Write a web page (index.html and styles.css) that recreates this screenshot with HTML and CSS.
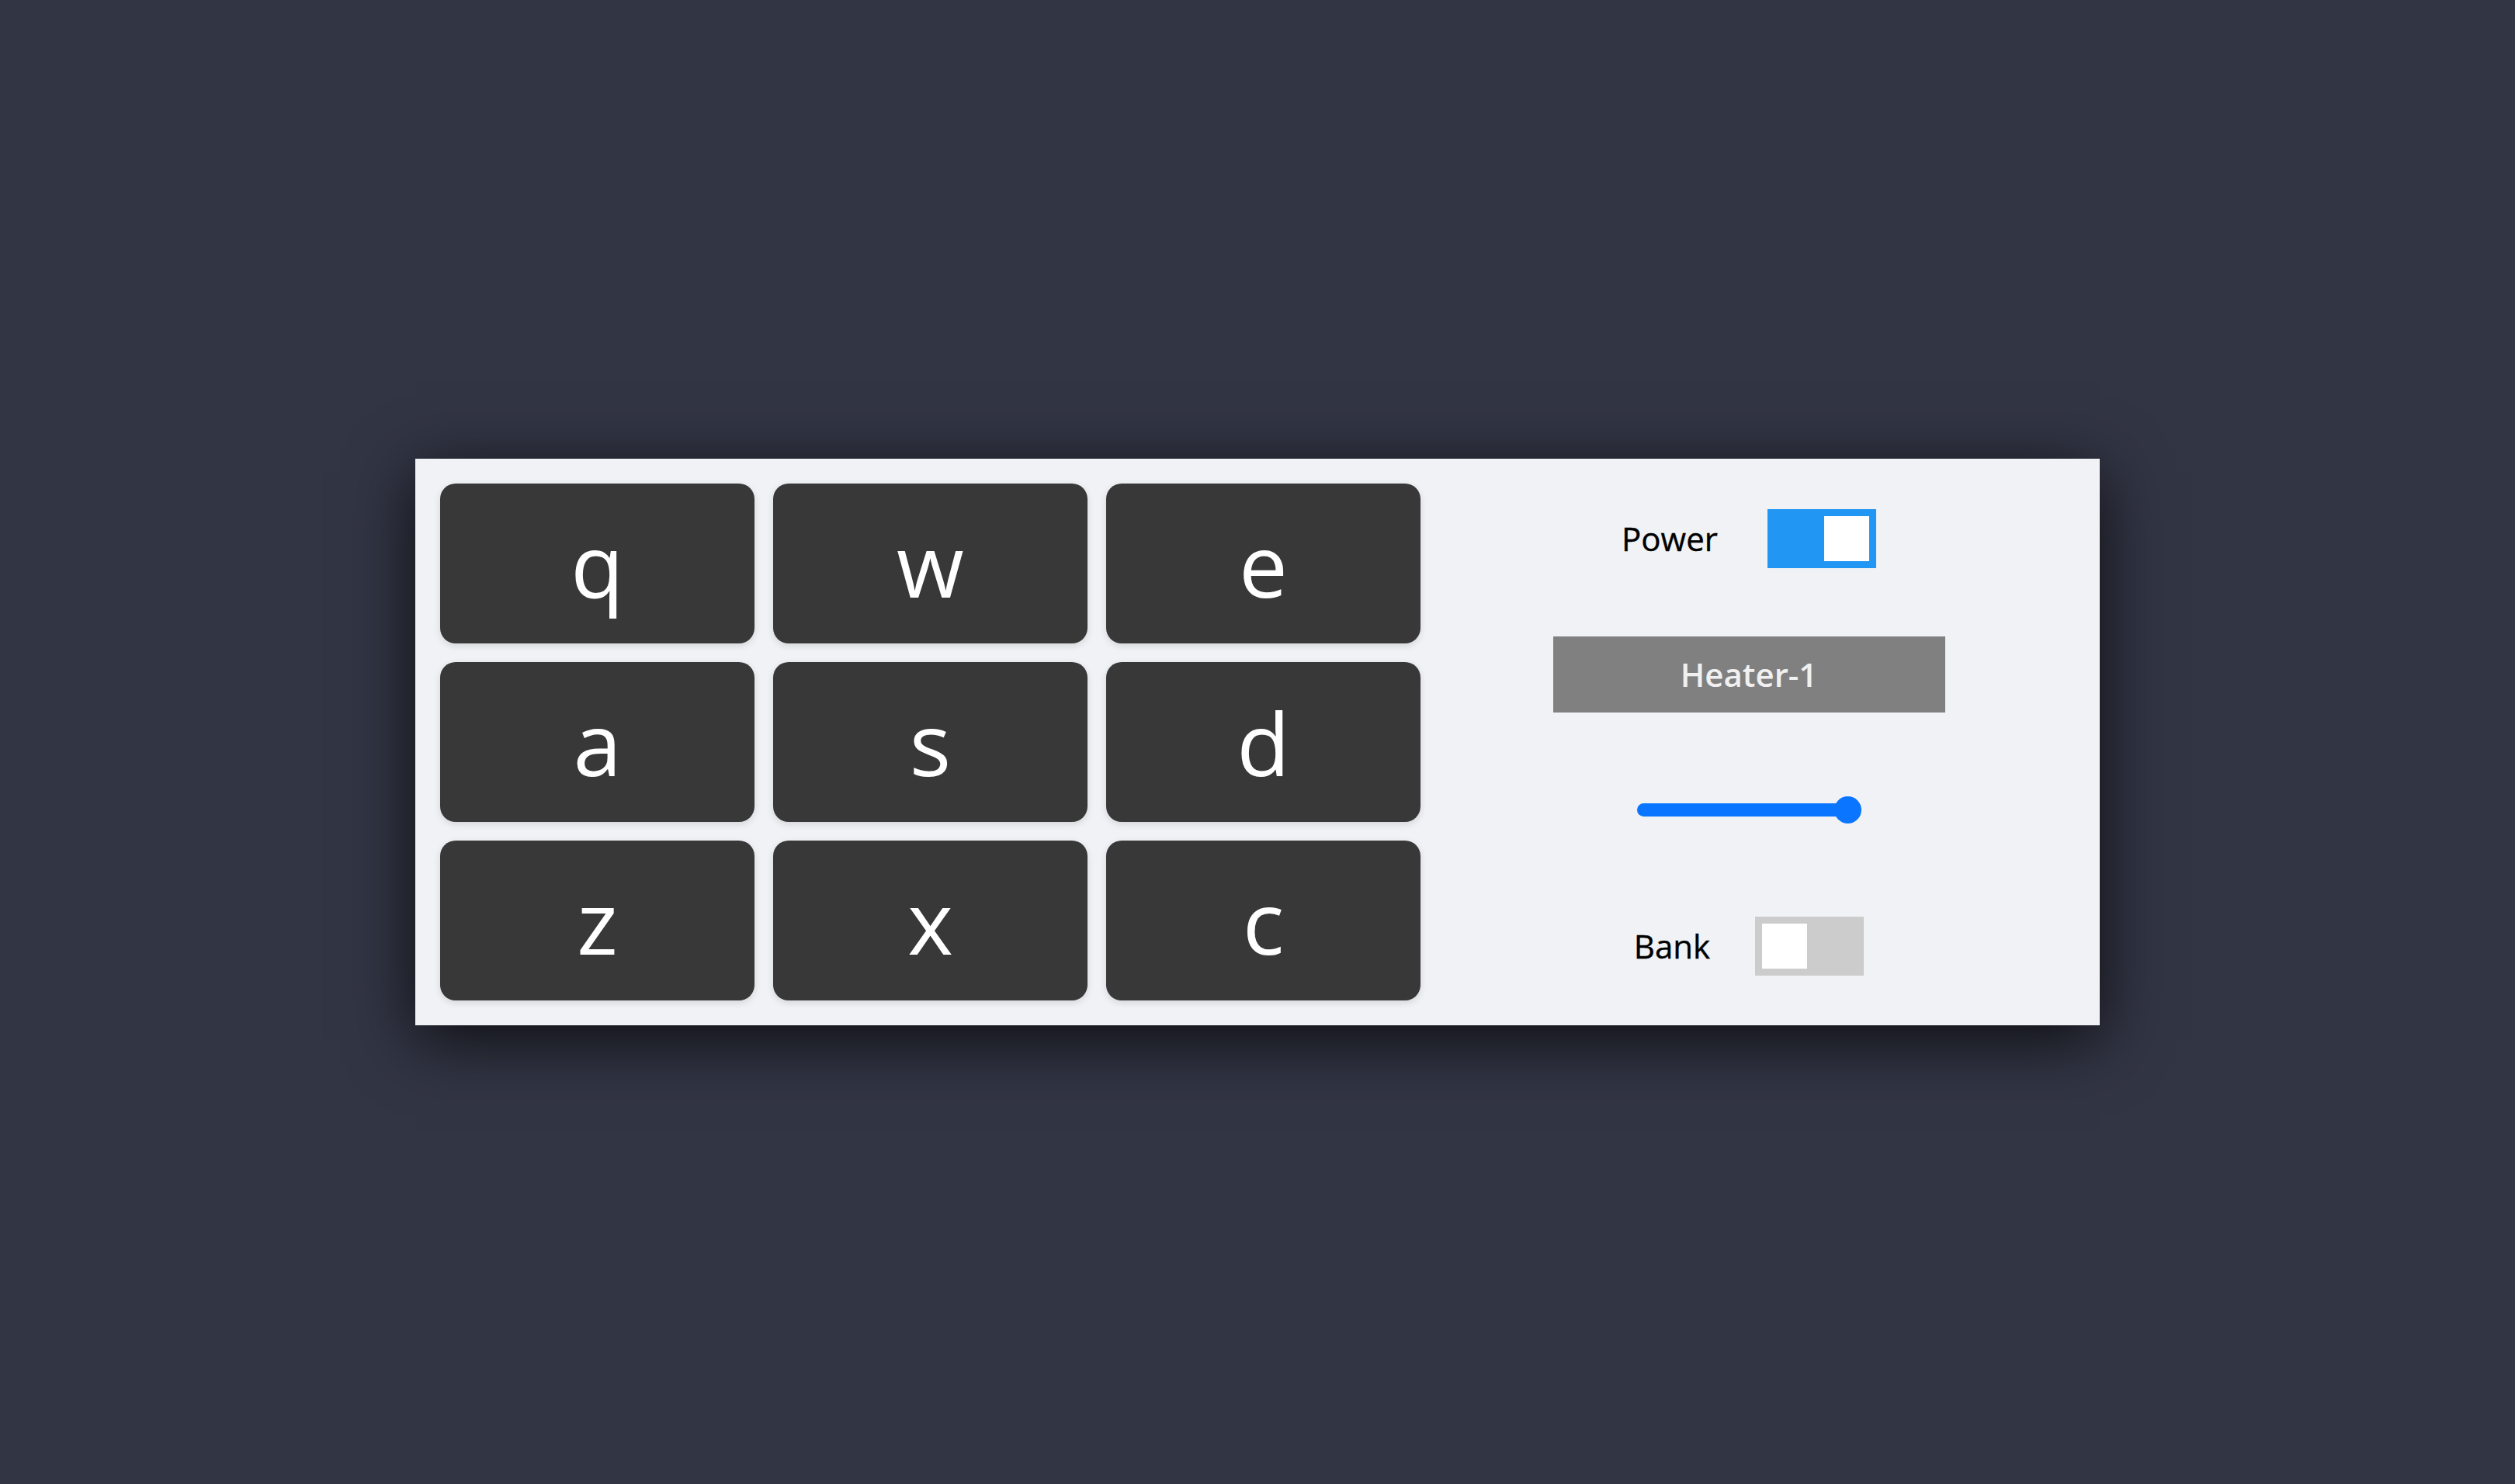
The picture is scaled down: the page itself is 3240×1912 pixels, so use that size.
FILE: index.html
```html
<!DOCTYPE html>
<html lang="en">
<head>
<meta charset="utf-8">
<title>Drum Machine</title>
<link rel="stylesheet" href="styles.css">
</head>
<body>
<main class="machine">
  <section class="pads">
    <div class="pad">q</div>
    <div class="pad">w</div>
    <div class="pad">e</div>
    <div class="pad">a</div>
    <div class="pad">s</div>
    <div class="pad">d</div>
    <div class="pad">z</div>
    <div class="pad">x</div>
    <div class="pad">c</div>
  </section>
  <section class="controls">
    <div class="row">
      <span class="label label-power">Power</span>
      <div class="switch switch-on"><span class="knob"></span></div>
    </div>
    <div class="row">
      <div class="display">Heater-1</div>
    </div>
    <div class="row">
      <div class="slider">
        <div class="track"></div>
        <span class="thumb"></span>
      </div>
    </div>
    <div class="row">
      <span class="label label-bank">Bank</span>
      <div class="switch switch-off"><span class="knob"></span></div>
    </div>
  </section>
</main>
</body>
</html>
```
FILE: styles.css
```css
html, body {
  margin: 0;
  padding: 0;
}
body {
  background: #323544;
  min-height: 100vh;
  display: flex;
  align-items: center;
  justify-content: center;
  font-family: "Open Sans", "Noto Sans", "Liberation Sans", sans-serif;
}
.machine {
  display: flex;
  align-items: center;
  background: #f0f2f5;
  padding: 32px;
  box-shadow: 0 18px 80px rgba(0, 0, 0, 0.75);
}
.pads {
  display: grid;
  grid-template-columns: repeat(3, 405px);
  grid-template-rows: repeat(3, 206px);
  gap: 24px;
}
.pad {
  background: #383838;
  color: #ffffff;
  border-radius: 20px;
  font-size: 112px;
  display: flex;
  align-items: center;
  justify-content: center;
  box-shadow: 0 3px 10px rgba(0, 0, 0, 0.12);
}
.controls {
  width: 840px;
  margin: -17px 0 -17px 3px;
  display: flex;
  flex-direction: column;
  justify-content: center;
}
.row {
  height: 175px;
  display: flex;
  align-items: center;
  justify-content: center;
}
.label {
  font-size: 42px;
  color: #000;
  -webkit-text-stroke: 0.4px #000;
}
.label-power {
  margin-right: 64px;
}
.label-bank {
  margin-right: 58px;
}
.switch {
  width: 140px;
  height: 76px;
  padding: 9px;
  box-sizing: border-box;
  display: flex;
}
.switch-on {
  background: #2196f3;
  justify-content: flex-end;
}
.switch-off {
  background: #cccccc;
  justify-content: flex-start;
}
.knob {
  width: 58px;
  height: 58px;
  background: #ffffff;
}
.display {
  width: 505px;
  height: 98px;
  background: #808080;
  color: #f0f0f0;
  font-size: 42px;
  font-weight: 600;
  display: flex;
  align-items: center;
  justify-content: center;
}
.slider {
  position: relative;
  width: 289px;
  height: 35px;
  display: flex;
  align-items: center;
}
.track {
  width: 280px;
  height: 17px;
  border-radius: 9px;
  background: #0a75ff;
}
.thumb {
  position: absolute;
  right: 0;
  top: 0;
  width: 35px;
  height: 35px;
  border-radius: 50%;
  background: #0a75ff;
}
```
